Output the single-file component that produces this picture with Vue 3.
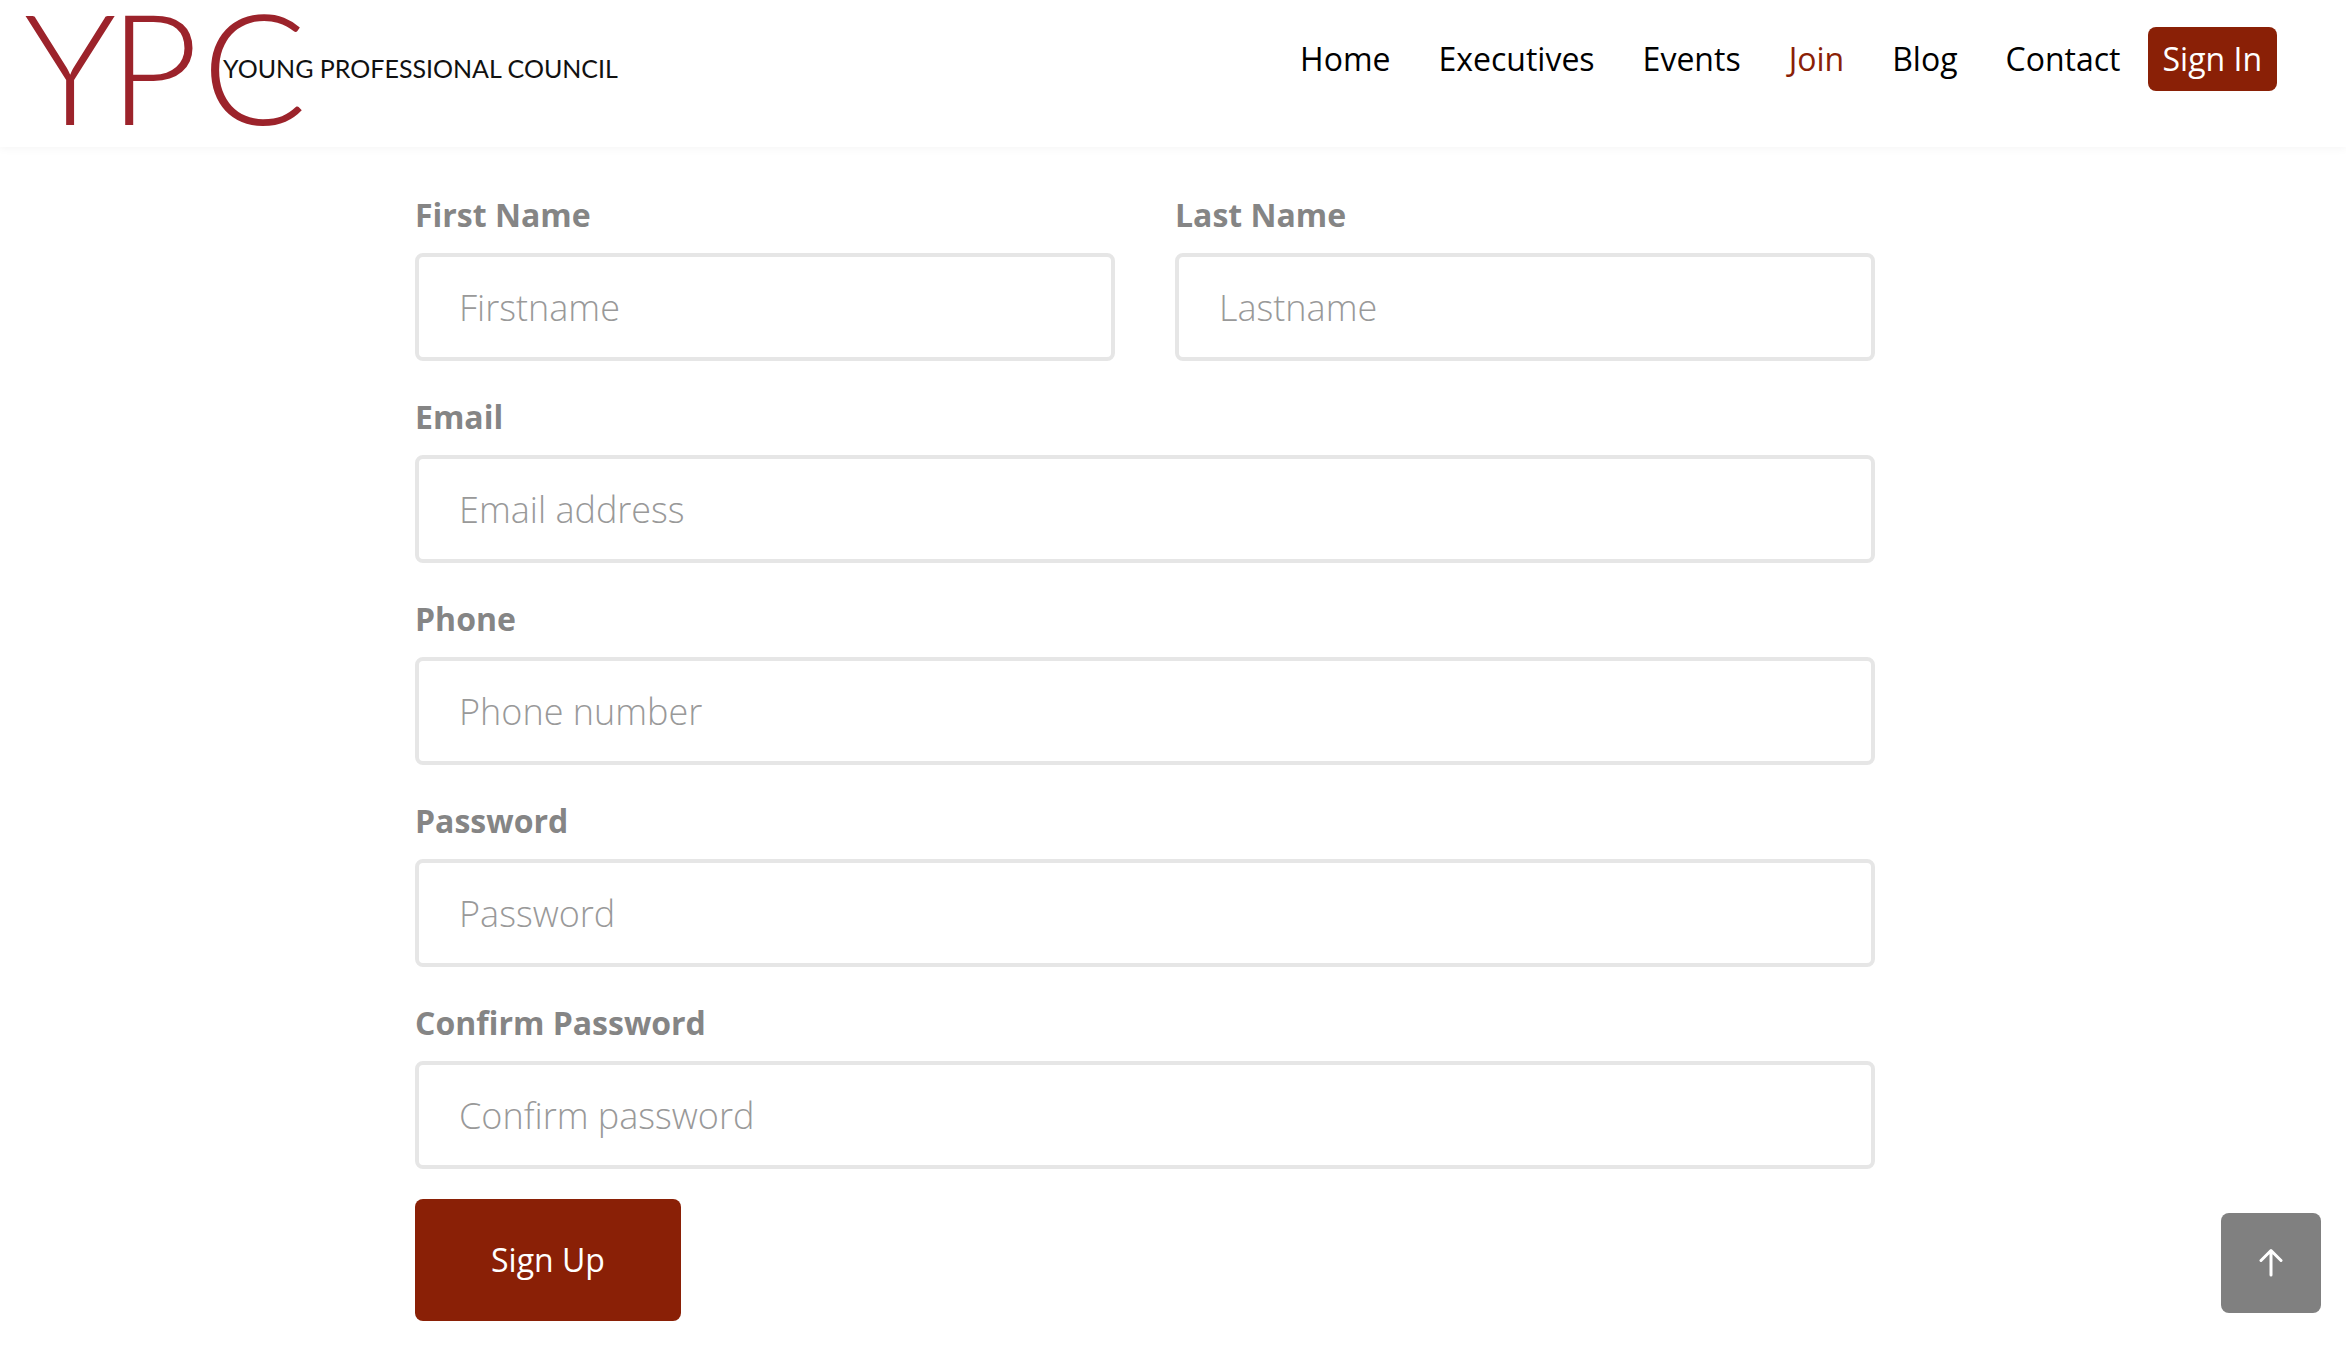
<script setup>
import { reactive } from 'vue'

const links = ['Home', 'Executives', 'Events', 'Join', 'Blog', 'Contact']

const fields = [
  { id: 'first', label: 'First Name', hint: 'Firstname', type: 'text', half: true },
  { id: 'last', label: 'Last Name', hint: 'Lastname', type: 'text', half: true },
  { id: 'email', label: 'Email', hint: 'Email address', type: 'email' },
  { id: 'phone', label: 'Phone', hint: 'Phone number', type: 'tel' },
  { id: 'password', label: 'Password', hint: 'Password', type: 'password' },
  { id: 'confirm', label: 'Confirm Password', hint: 'Confirm password', type: 'password' },
]

const form = reactive({ first: '', last: '', email: '', phone: '', password: '', confirm: '' })

function toTop() {
  window.scrollTo({ top: 0, behavior: 'smooth' })
}
</script>

<template>
  <div class="page">
    <header class="header">
      <a class="brand" href="#" aria-label="Young Professional Council">
        <svg width="640" height="147" viewBox="0 0 640 147">
          <text class="initials" y="125">
            <tspan x="24">Y</tspan>
            <tspan x="109">P</tspan>
            <tspan x="202">C</tspan>
          </text>
          <text class="motto" x="223" y="78">YOUNG PROFESSIONAL COUNCIL</text>
        </svg>
      </a>
      <nav class="nav">
        <a v-for="link in links" :key="link" href="#" :class="{ active: link === 'Join' }">{{ link }}</a>
        <a class="signin" href="#">Sign In</a>
      </nav>
    </header>

    <main class="content">
      <form class="form" @submit.prevent>
        <div v-for="f in fields" :key="f.id" class="field" :class="{ half: f.half }">
          <label :for="f.id">{{ f.label }}</label>
          <input :id="f.id" v-model="form[f.id]" :type="f.type" :placeholder="f.hint" />
        </div>
        <button class="submit" type="submit">Sign Up</button>
      </form>
    </main>

    <button class="top" type="button" aria-label="Back to top" @click="toTop">
      <svg width="24" height="30" viewBox="0 0 24 30" fill="none" stroke="#fff" stroke-width="3" stroke-linecap="round" stroke-linejoin="round">
        <path d="M12 27V3M2 12.5L12 2.5L22 12.5" />
      </svg>
    </button>
  </div>
</template>

<style>
body {
  margin: 0;
  background: #fff;
}
</style>

<style scoped>
.page {
  font-family: "Open Sans", "Noto Sans", sans-serif;
  font-size: 32px;
  color: #858585;
}
.header {
  display: flex;
  justify-content: space-between;
  align-items: flex-start;
  height: 147px;
  padding-right: 69px;
  background: #fff;
  box-shadow: 0 0 10px rgba(0, 0, 0, 0.06);
}
.brand svg {
  display: block;
}
.initials {
  font-family: Lato, sans-serif;
  font-weight: 300;
  font-size: 155px;
  fill: #9c232b;
}
.motto {
  font-family: Lato, sans-serif;
  font-weight: 400;
  font-size: 25px;
  fill: #111;
}
.nav {
  display: flex;
  align-items: center;
  gap: 48px;
  padding-top: 27px;
}
.nav a {
  color: #000;
  line-height: 64px;
  text-decoration: none;
}
.nav .active {
  color: #8a2006;
}
.nav .signin {
  margin-left: -21px;
  padding: 0 15px;
  border-radius: 8px;
  background: #8a2006;
  color: #fff;
  font-weight: 500;
}
.content {
  padding: 42px 56px 24px 0;
}
.form {
  display: grid;
  grid-template-columns: 1fr 1fr;
  gap: 30px 60px;
  max-width: 1460px;
  margin: 0 auto;
}
.field {
  grid-column: 1 / -1;
}
.half {
  grid-column: auto;
}
label {
  display: block;
  margin-bottom: 12px;
  line-height: 52px;
  font-weight: 700;
}
input {
  display: block;
  box-sizing: border-box;
  width: 100%;
  height: 108px;
  padding: 0 40px;
  border: 4px solid #e6e6e6;
  border-radius: 8px;
  background: #fff;
  color: #555;
  font-family: inherit;
  font-weight: 300;
  font-size: 36px;
}
input::placeholder {
  color: #999;
  opacity: 1;
}
.submit {
  justify-self: start;
  height: 122px;
  padding: 0 76px 2px;
  border: 0;
  border-radius: 8px;
  background: #8a2006;
  color: #fff;
  font: 500 32px "Open Sans", "Noto Sans", sans-serif;
}
.top {
  position: fixed;
  right: 25px;
  bottom: 32px;
  display: flex;
  align-items: center;
  justify-content: center;
  width: 100px;
  height: 100px;
  padding: 0;
  border: 0;
  border-radius: 8px;
  background: #808080;
}
</style>
